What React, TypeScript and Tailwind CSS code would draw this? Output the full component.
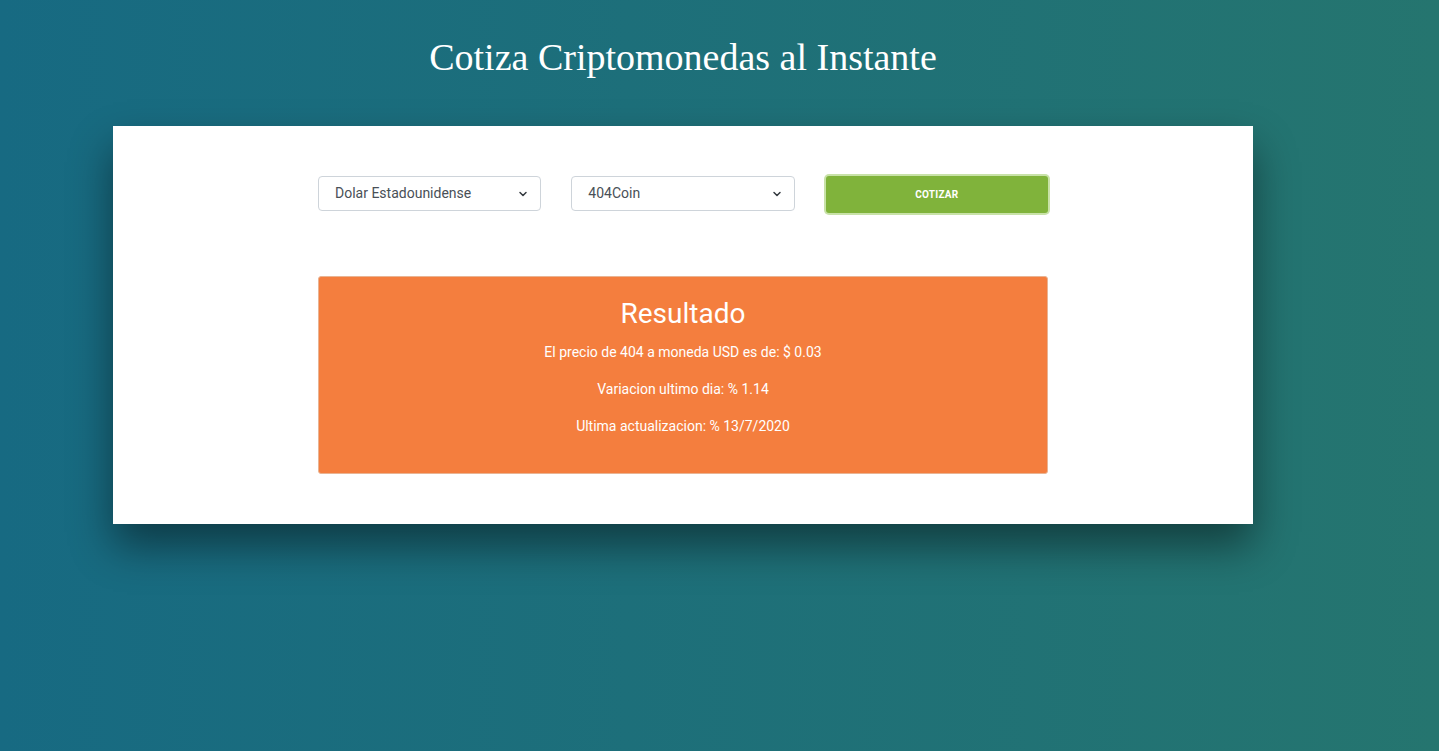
import { ChevronDown } from 'lucide-react';

const results = [
  'El precio de 404 a moneda USD es de: $ 0.03',
  'Variacion ultimo dia: % 1.14',
  'Ultima actualizacion: % 13/7/2020',
];

const Select = ({ value }: { value: string }) => (
  <div className="relative h-[35px] rounded-[4px] border border-[#ced4da] bg-white flex items-center pl-[16px] pr-[11px]">
    <span className="flex-1 text-[14px] text-[#495057]">{value}</span>
    <ChevronDown className="w-[12px] h-[12px] text-[#343a40]" strokeWidth={3} />
  </div>
);

export default function App() {
  return (
    <div
      className="min-h-[751px] w-full bg-gradient-to-r from-[#176a82] to-[#25756f] pb-10"
      style={{ fontFamily: 'Roboto, "Liberation Sans", sans-serif' }}
    >
      <h1
        className="pt-[33px] h-[126px] w-[1140px] ml-[113px] text-center text-white text-[38px] leading-[48px]"
        style={{ fontFamily: '"Liberation Serif", "DejaVu Serif", serif' }}
      >
        Cotiza Criptomonedas al Instante
      </h1>

      <div className="w-[1140px] ml-[113px] bg-white py-[50px] shadow-[0_22px_40px_rgba(0,0,0,0.45)]">
        <div className="w-[730px] mx-auto">
          <div className="grid grid-cols-3 gap-[30px] items-start">
            <Select value="Dolar Estadounidense" />
            <Select value="404Coin" />
            <button className="h-[37px] rounded-[3px] bg-[#80b33b] text-white text-[10px] font-bold tracking-wide ring-2 ring-[#c8e2a8] ml-[1px]">
              COTIZAR
            </button>
          </div>

          <div className="mt-[63px] h-[198px] rounded-[3px] border border-[#e9b493] bg-[#f47e3e] text-white text-center pt-[19px]">
            <h2 className="text-[28px] leading-[36px]">Resultado</h2>
            <div className="mt-[12px] flex flex-col gap-[20px] text-[14px] leading-[17px]">
              {results.map(line => (
                <p key={line}>{line}</p>
              ))}
            </div>
          </div>
        </div>
      </div>
    </div>
  );
}
